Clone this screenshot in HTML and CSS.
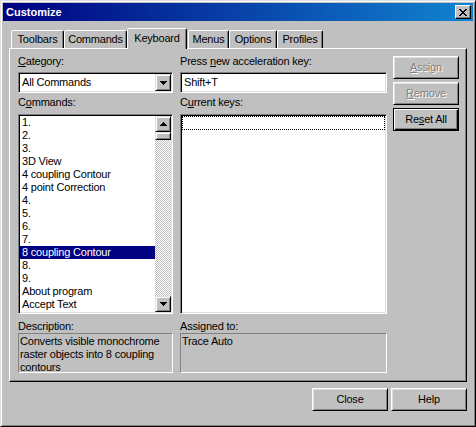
FILE: index.html
```html
<!DOCTYPE html>
<html>
<head>
<meta charset="utf-8">
<title>Customize</title>
<link rel="stylesheet" href="styles.css">
</head>
<body>
<div class="window">
  <div class="titlebar">
    <span class="title">Customize</span>
    <div class="tbtn">
      <svg width="8" height="7" viewBox="0 0 8 7" shape-rendering="crispEdges"><path d="M0 0h2v1H0zM6 0h2v1H6zM1 1h2v1H1zM5 1h2v1H5zM2 2h4v1H2zM3 3h2v1H3zM2 4h4v1H2zM1 5h2v1H1zM5 5h2v1H5zM0 6h2v1H0zM6 6h2v1H6z" fill="#000"/></svg>
    </div>
  </div>
  <div class="main">
    <div class="tabs">
      <div class="tab t-toolbars">Toolbars</div>
      <div class="tab t-commands">Commands</div>
      <div class="tab active t-keyboard">Keyboard</div>
      <div class="tab t-menus">Menus</div>
      <div class="tab t-options">Options</div>
      <div class="tab t-profiles">Profiles</div>
    </div>
    <div class="panel">
      <div class="col col-left">
        <div class="lbl lbl-first"><u>C</u>ategory:</div>
        <div class="combo sunken">
          <span class="combo-text">All Commands</span>
          <div class="raised arrow-btn combo-btn">
            <svg width="7" height="4" viewBox="0 0 7 4" shape-rendering="crispEdges"><path d="M0 0h7v1H0zM1 1h5v1H1zM2 2h3v1H2zM3 3h1v1H3z" fill="#000"/></svg>
          </div>
        </div>
        <div class="lbl lbl-mid">C<u>o</u>mmands:</div>
        <div class="listbox sunken">
          <div class="items">
            <div class="item">1.</div>
            <div class="item">2.</div>
            <div class="item">3.</div>
            <div class="item">3D View</div>
            <div class="item">4 coupling Contour</div>
            <div class="item">4 point Correction</div>
            <div class="item">4.</div>
            <div class="item">5.</div>
            <div class="item">6.</div>
            <div class="item">7.</div>
            <div class="item selected">8 coupling Contour</div>
            <div class="item">8.</div>
            <div class="item">9.</div>
            <div class="item">About program</div>
            <div class="item">Accept Text</div>
          </div>
          <div class="vscroll">
            <div class="raised arrow-btn sb-btn">
              <svg width="7" height="4" viewBox="0 0 7 4" shape-rendering="crispEdges"><path d="M3 0h1v1H3zM2 1h3v1H2zM1 2h5v1H1zM0 3h7v1H0z" fill="#000"/></svg>
            </div>
            <div class="track"><div class="raised thumb"></div></div>
            <div class="raised arrow-btn sb-btn">
              <svg width="7" height="4" viewBox="0 0 7 4" shape-rendering="crispEdges"><path d="M0 0h7v1H0zM1 1h5v1H1zM2 2h3v1H2zM3 3h1v1H3z" fill="#000"/></svg>
            </div>
          </div>
        </div>
        <div class="lbl lbl-desc">Description:</div>
        <div class="static">Converts visible monochrome<br>raster objects into 8 coupling<br>contours</div>
      </div>
      <div class="col col-mid">
        <div class="lbl lbl-first">Press <u>n</u>ew acceleration key:</div>
        <div class="textbox sunken">Shift+T</div>
        <div class="lbl lbl-mid">C<u>u</u>rrent keys:</div>
        <div class="listbox keys sunken">
          <div class="focusrow"></div>
        </div>
        <div class="lbl lbl-desc">Assigned to:</div>
        <div class="static">Trace Auto</div>
      </div>
      <div class="col col-right">
        <div class="btn disabled"><span><u>A</u>ssign</span></div>
        <div class="btn disabled"><span><u>R</u>emove</span></div>
        <div class="btn default"><span>Re<u>s</u>et All</span></div>
      </div>
    </div>
    <div class="footer">
      <div class="btn wide">Close</div>
      <div class="btn wide">Help</div>
    </div>
  </div>
</div>
</body>
</html>
```
FILE: styles.css
```css
* { box-sizing: border-box; }
html, body { margin: 0; padding: 0; }
body {
  width: 476px;
  height: 427px;
  overflow: hidden;
  background: #c0c0c0;
  font-family: "Liberation Sans", Arial, sans-serif;
  font-size: 11px;
  line-height: 13px;
  letter-spacing: -0.2px;
  color: #000;
}
u { text-decoration: underline; text-underline-offset: 1px; }

.window {
  width: 476px;
  height: 427px;
  background: #c0c0c0;
  border: 1px solid;
  border-color: #dfdfdf #000 #000 #dfdfdf;
  box-shadow: inset 1px 1px #fff, inset -1px -1px #808080;
  padding: 2px;
  display: flex;
  flex-direction: column;
}

.titlebar {
  height: 18px;
  background: linear-gradient(to right, #000080, #1084d0);
  display: flex;
  align-items: center;
  justify-content: space-between;
  padding: 0 2px 0 3px;
}
.title {
  color: #fff;
  font-weight: bold;
  letter-spacing: 0;
}
.tbtn {
  width: 16px;
  height: 14px;
  background: #c0c0c0;
  border: 1px solid;
  border-color: #fff #000 #000 #fff;
  box-shadow: inset -1px -1px #808080;
  display: flex;
  align-items: center;
  justify-content: center;
  padding-right: 1px;
}

.main {
  flex: 1;
  padding: 7px 6px 0 6px;
  display: flex;
  flex-direction: column;
}

.tabs {
  height: 21px;
  margin-bottom: -1px;
  padding-left: 2px;
  display: flex;
  align-items: flex-start;
  position: relative;
  z-index: 1;
}
.tab {
  height: 18px;
  margin-top: 2px;
  background: #c0c0c0;
  border: 1px solid;
  border-bottom: none;
  border-color: #fff #000 transparent #fff;
  border-radius: 2px 2px 0 0;
  box-shadow: inset -1px 0 #808080;
  padding-top: 2px;
  text-align: center;
}
.tab.active {
  height: 21px;
  margin-top: 0;
  margin-right: 1px;
  padding-top: 3px;
}
.t-toolbars { width: 53px; }
.t-commands { width: 63px; }
.t-keyboard { width: 60px; }
.t-menus { width: 41px; }
.t-options { width: 48px; }
.t-profiles { width: 46px; }

.panel {
  width: 458px;
  height: 334px;
  border: 1px solid;
  border-color: #fff #000 #000 #fff;
  box-shadow: inset -1px -1px #808080;
  padding: 6px 0 0 8px;
  display: flex;
}

.col { display: flex; flex-direction: column; }
.col-left { width: 155px; }
.col-mid { width: 207px; margin-left: 7px; }
.col-right { width: 66px; margin-left: 6px; padding-top: 1px; gap: 3px; }

.lbl { white-space: nowrap; }
.lbl-first { height: 17px; }
.lbl-mid { height: 21px; padding-top: 3px; }
.lbl-desc { height: 19px; padding-top: 6px; }

.sunken {
  border: 1px solid;
  border-color: #808080 #fff #fff #808080;
  box-shadow: inset 1px 1px #000, inset -1px -1px #dfdfdf;
  padding: 1px;
  background: #fff;
}
.raised {
  background: #c0c0c0;
  border: 1px solid;
  border-color: #dfdfdf #000 #000 #dfdfdf;
  box-shadow: inset 1px 1px #fff, inset -1px -1px #808080;
}

.combo {
  height: 21px;
  display: flex;
  align-items: center;
}
.combo-text {
  flex: 1;
  padding-left: 2px;
}
.arrow-btn {
  display: flex;
  align-items: center;
  justify-content: center;
}
.combo-btn {
  width: 16px;
  height: 17px;
}

.textbox {
  height: 21px;
  padding: 1px 0 0 3px;
  line-height: 17px;
}

.listbox {
  height: 200px;
  display: flex;
}
.items { flex: 1; }
.item {
  height: 13px;
  padding-left: 2px;
  white-space: nowrap;
}
.item.selected {
  background: #000080;
  color: #fff;
}
.vscroll {
  width: 16px;
  display: flex;
  flex-direction: column;
}
.sb-btn { width: 16px; height: 16px; }
.track {
  flex: 1;
  background: repeating-conic-gradient(#c0c0c0 0 25%, #fff 0 50%) 0 0 / 2px 2px;
}
.thumb { width: 16px; height: 8px; }

.keys { display: block; }
.focusrow {
  height: 14px;
  border: 1px dotted #000;
}

.static {
  height: 40px;
  border: 1px solid;
  border-color: #808080 #fff #fff #808080;
  padding: 1px 0 0 1px;
  overflow: hidden;
}

.btn {
  height: 23px;
  width: 66px;
  background: #c0c0c0;
  border: 1px solid;
  border-color: #fff #000 #000 #fff;
  box-shadow: inset 1px 1px #dfdfdf, inset -1px -1px #808080;
  display: flex;
  align-items: center;
  justify-content: center;
}
.btn.default {
  border-color: #000;
  box-shadow: inset 1px 1px #fff, inset -1px -1px #000, inset -2px -2px #808080;
}
.btn.disabled {
  color: #808080;
  text-shadow: 1px 1px 0 #fff;
}
.btn.wide { width: 76px; }

.footer {
  margin-top: 6px;
  width: 458px;
  display: flex;
  justify-content: flex-end;
  gap: 3px;
}
```
